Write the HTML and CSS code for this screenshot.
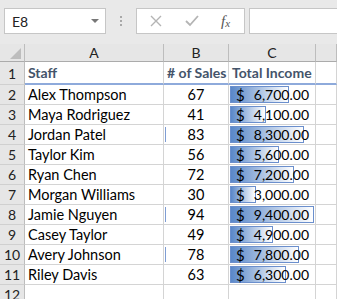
FILE: index.html
```html
<!DOCTYPE html>
<html lang="en">
    <head>
        <meta charset="UTF-8">
        <meta name="viewport" content="width=device-width, initial-scale=1.0">
        <title>Staff Sales</title>
        <link rel="stylesheet" href="styles.css">
    </head>
    <body>
        <div class="toolbar">
            <div class="namebox"><span>E8</span><span class="caret"></span></div>
            <div class="grip"><i></i><i></i><i></i></div>
            <div class="fxbox">
                <svg class="ico" width="12" height="12" viewBox="0 0 12 12"><path d="M1 1L11 11M11 1L1 11" stroke="#b4b4b4" stroke-width="1.4" fill="none"/></svg>
                <svg class="ico" width="14" height="12" viewBox="0 0 14 12"><path d="M1 6L5 10L13 1" stroke="#b4b4b4" stroke-width="1.8" fill="none"/></svg>
                <span class="fx">f<sub>x</sub></span>
            </div>
            <div class="formula"></div>
        </div>

        <div class="sheet">
            <div class="corner"><span class="tri"></span></div>
            <div class="colhd">A</div>
            <div class="colhd">B</div>
            <div class="colhd">C</div>
            <div class="colhd last"></div>

            <div class="rowhd">1</div>
            <div class="cell head">Staff</div>
            <div class="cell head">#&nbsp;of Sales</div>
            <div class="cell head">Total Income</div>
            <div class="cell head"></div>

            <div class="rowhd">2</div>
            <div class="cell">Alex Thompson</div>
            <div class="cell num">67</div>
            <div class="cell money"><span class="bar" style="width: 59px"></span><span class="cur">$</span><span class="amt">6,700.00</span></div>
            <div class="cell"></div>

            <div class="rowhd">3</div>
            <div class="cell">Maya Rodriguez</div>
            <div class="cell num">41</div>
            <div class="cell money"><span class="bar" style="width: 36px"></span><span class="cur">$</span><span class="amt">4,100.00</span></div>
            <div class="cell"></div>

            <div class="rowhd">4</div>
            <div class="cell">Jordan Patel</div>
            <div class="cell num"><span class="tick"></span>83</div>
            <div class="cell money"><span class="bar" style="width: 74px"></span><span class="cur">$</span><span class="amt">8,300.00</span></div>
            <div class="cell"></div>

            <div class="rowhd">5</div>
            <div class="cell">Taylor Kim</div>
            <div class="cell num">56</div>
            <div class="cell money"><span class="bar" style="width: 49px"></span><span class="cur">$</span><span class="amt">5,600.00</span></div>
            <div class="cell"></div>

            <div class="rowhd">6</div>
            <div class="cell">Ryan Chen</div>
            <div class="cell num">72</div>
            <div class="cell money"><span class="bar" style="width: 64px"></span><span class="cur">$</span><span class="amt">7,200.00</span></div>
            <div class="cell"></div>

            <div class="rowhd">7</div>
            <div class="cell">Morgan Williams</div>
            <div class="cell num">30</div>
            <div class="cell money"><span class="bar" style="width: 26px"></span><span class="cur">$</span><span class="amt">3,000.00</span></div>
            <div class="cell"></div>

            <div class="rowhd">8</div>
            <div class="cell">Jamie Nguyen</div>
            <div class="cell num"><span class="tick"></span>94</div>
            <div class="cell money"><span class="bar" style="width: 84px"></span><span class="cur">$</span><span class="amt">9,400.00</span></div>
            <div class="cell"></div>

            <div class="rowhd">9</div>
            <div class="cell">Casey Taylor</div>
            <div class="cell num">49</div>
            <div class="cell money"><span class="bar" style="width: 43px"></span><span class="cur">$</span><span class="amt">4,900.00</span></div>
            <div class="cell"></div>

            <div class="rowhd">10</div>
            <div class="cell">Avery Johnson</div>
            <div class="cell num"><span class="tick"></span>78</div>
            <div class="cell money"><span class="bar" style="width: 69px"></span><span class="cur">$</span><span class="amt">7,800.00</span></div>
            <div class="cell"></div>

            <div class="rowhd">11</div>
            <div class="cell">Riley Davis</div>
            <div class="cell num">63</div>
            <div class="cell money"><span class="bar" style="width: 56px"></span><span class="cur">$</span><span class="amt">6,300.00</span></div>
            <div class="cell"></div>

            <div class="rowhd">12</div>
            <div class="cell"></div>
            <div class="cell"></div>
            <div class="cell"></div>
            <div class="cell"></div>
        </div>
    </body>
</html>
```

FILE: styles.css
```css
body {
    margin: 0;
    font-family: Lato, "Liberation Sans", sans-serif;
    background: #fff;
    overflow: hidden;
}

/* formula bar strip */
.toolbar {
    display: flex;
    align-items: flex-start;
    height: 44px;
    box-sizing: border-box;
    padding: 8px 0 0 4px;
    background: #e9e9e9;
}
.namebox {
    width: 102px;
    height: 26px;
    box-sizing: border-box;
    border: 1px solid #c6c6c6;
    background: #fff;
    display: flex;
    align-items: center;
    justify-content: space-between;
    padding: 0 6px 0 7px;
    font-size: 14px;
    color: #222;
}
.caret {
    width: 0;
    height: 0;
    border-left: 4px solid transparent;
    border-right: 4px solid transparent;
    border-top: 4px solid #777;
}
.grip {
    width: 30px;
    height: 26px;
    display: flex;
    flex-direction: column;
    align-items: center;
    justify-content: center;
    gap: 2px;
}
.grip i {
    width: 2px;
    height: 2px;
    background: #a8a8a8;
}
.fxbox {
    width: 109px;
    height: 26px;
    box-sizing: border-box;
    border: 1px solid #c6c6c6;
    background: #fff;
    display: flex;
    align-items: center;
    padding-left: 13px;
}
.ico { margin-right: 23px; }
.fx {
    font-family: "Liberation Serif", serif;
    font-style: italic;
    font-size: 15px;
    color: #555;
    margin-left: -1px;
}
.fx sub { font-size: 11px; vertical-align: -1px; }
.formula {
    flex: 1;
    height: 26px;
    box-sizing: border-box;
    margin-left: 4px;
    border: 1px solid #c6c6c6;
    border-right: none;
    background: #fff;
}

/* sheet grid */
.sheet {
    display: grid;
    grid-template-columns: 25px 139px 65px 87px 1fr;
    grid-template-rows: 18px 23px repeat(11, 20px);
}
.sheet > div {
    box-sizing: border-box;
    border-right: 1px solid #d4d4d4;
    border-bottom: 1px solid #d4d4d4;
}
.corner {
    position: relative;
    background: #e6e6e6;
    border-right-color: #bdbdbd !important;
    border-bottom-color: #ababab !important;
}
.tri {
    position: absolute;
    right: 3px;
    bottom: 2px;
    width: 0;
    height: 0;
    border-left: 11px solid transparent;
    border-bottom: 11px solid #bdbdbd;
}
.colhd {
    background: #e6e6e6;
    border-right-color: #bdbdbd !important;
    border-bottom-color: #ababab !important;
    text-align: center;
    font-size: 14px;
    line-height: 17px;
    color: #222;
}
.rowhd {
    background: #e6e6e6;
    border-right-color: #bdbdbd !important;
    border-bottom-color: #d0d0d0 !important;
    font-size: 14px;
    color: #222;
    display: flex;
    align-items: center;
    justify-content: center;
}
.cell {
    position: relative;
    display: flex;
    align-items: center;
    padding: 0 3px;
    font-size: 14.5px;
    color: #000;
    white-space: nowrap;
}
.head {
    font-size: 14px;
    font-weight: bold;
    color: #44546a;
    border-bottom: 2px solid #8eaadb !important;
    padding: 0 2px 0 3px;
}
.num { justify-content: center; }
.money {
    justify-content: space-between;
    padding: 0 6px 0 7px;
}
.cur { font-size: 15px; }
.amt { font-size: 14px; }
.cur, .amt { position: relative; }
.bar {
    position: absolute;
    left: 1px;
    top: 1px;
    bottom: 1px;
    box-sizing: border-box;
    border: 1px solid #6b8fcd;
    background: linear-gradient(to right, #5987c8, #ffffff);
}
.tick {
    position: absolute;
    left: 1px;
    top: 2px;
    bottom: 2px;
    width: 1px;
    background: #7f9dd3;
}
```
